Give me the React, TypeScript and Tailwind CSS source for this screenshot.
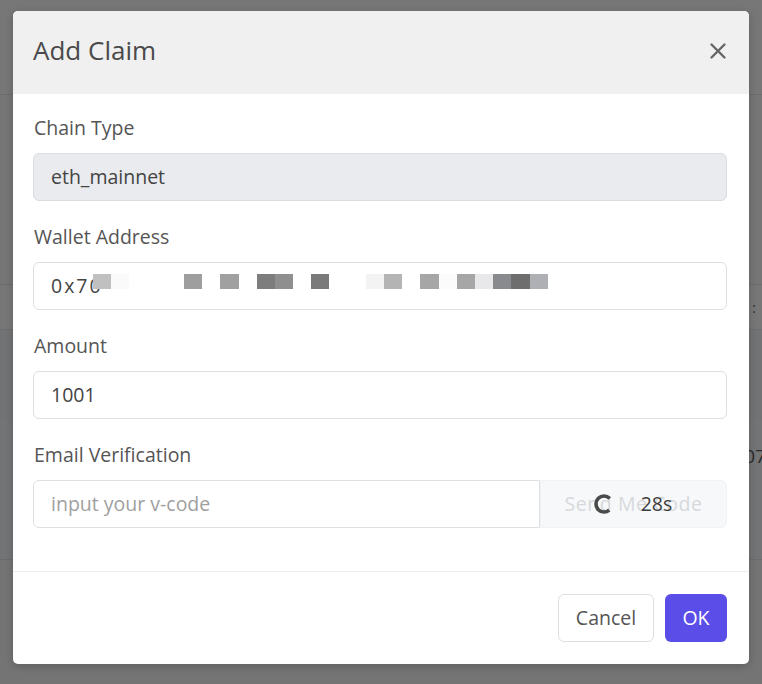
import React from "react";

const mosaic = [
  "#c0c0c0", "#fafafa", "#ffffff", "#ffffff", "#ffffff", "#9e9e9e", "#ffffff",
  "#a0a0a0", "#ffffff", "#7d7d7d", "#8f8f8f", "#ffffff", "#7a7a7a", "#ffffff",
  "#ffffff", "#f3f3f3", "#b4b4b4", "#ffffff", "#a6a6a6", "#fbfbfb", "#a6a6a6",
  "#e8e8ea", "#888a8e", "#6e6e6e", "#aeb0b4",
];

const Label = ({ children }: { children: React.ReactNode }) => (
  <div className="mb-[12px] text-[19.5px] leading-[26px] text-[#555]">{children}</div>
);

const App = () => {
  return (
    <div
      className="relative h-[684px] w-[762px] overflow-hidden bg-[#767676]"
      style={{ fontFamily: "'Open Sans', Lato, sans-serif" }}
    >
      {/* page behind the overlay */}
      <div className="flex flex-col">
        <div className="h-[95px] border-b border-[#6c6c6c] bg-[#777]" />
        <div className="h-[190px] border-b border-[#6c6c6c] bg-[#767676]" />
        <div className="flex h-[45px] justify-end border-b border-[#6c6c6c] bg-[#777] pr-[6px] pt-[12px] text-[14px] text-[#333]">:</div>
        <div className="h-[90px] bg-[#717375]" />
        <div className="flex h-[140px] justify-end border-b border-[#6c6c6c] bg-[#737476] pt-[22px] text-[19px] text-[#2a2a2a]">
          <span className="-mr-[4px]">07</span>
        </div>
        <div className="h-[124px] bg-[#747474]" />
      </div>

      <div className="absolute left-[13px] top-[11px] w-[736px] overflow-hidden rounded-[5px] bg-white shadow-[0_2px_8px_rgba(0,0,0,0.2)]">
        <div className="flex h-[83px] items-center justify-between bg-[#f0f0f0] pl-[20px] pr-[22px]">
          <h2 className="pb-[4px] text-[26px] text-[#4a4a4a]">Add Claim</h2>
          <svg width="18" height="18" viewBox="0 0 18 18" className="mb-[4px]">
            <path d="M2.5 2.5 L15.5 15.5 M15.5 2.5 L2.5 15.5" stroke="#666" strokeWidth="2.4" strokeLinecap="round" />
          </svg>
        </div>

        <div className="flex flex-col gap-[23px] pb-[43px] pl-[20px] pr-[22px] pt-[21px]">
          <div>
            <Label>
              <span className="pl-[1px]">Chain Type</span>
            </Label>
            <div className="flex h-[48px] items-center rounded-[6px] border border-[#d9dce0] bg-[#e9ebee] px-[17px] text-[19.5px] text-[#444]">
              eth_mainnet
            </div>
          </div>

          <div>
            <Label>
              <span className="pl-[1px]">Wallet Address</span>
            </Label>
            <div className="relative flex h-[48px] items-center rounded-[6px] border border-[#dcdfe3] bg-white px-[17px] text-[19.5px] text-[#444]">
              <span className="tracking-[2px]">0x70</span>
              <div className="absolute left-[59px] top-[11px] flex">
                {mosaic.map((c, i) => (
                  <div key={i} className="h-[15px] w-[18.2px]" style={{ background: c }} />
                ))}
              </div>
            </div>
          </div>

          <div>
            <Label>
              <span className="pl-[1px]">Amount</span>
            </Label>
            <div className="flex h-[48px] items-center rounded-[6px] border border-[#dcdfe3] bg-white px-[17px] text-[19.5px] text-[#444]">
              1001
            </div>
          </div>

          <div>
            <Label>
              <span className="pl-[1px]">Email Verification</span>
            </Label>
            <div className="flex h-[48px]">
              <div className="flex flex-1 items-center rounded-l-[6px] border border-[#dcdfe3] bg-white px-[17px] text-[19.5px] text-[#a0a0a0]">
                input your v-code
              </div>
              <div className="relative flex w-[187px] items-center justify-center rounded-r-[6px] border border-[#f1f2f4] bg-[#f7f8f9] text-[19.5px] tracking-[0.6px] text-[#d6d8dc]">
                Send Me Code
                <div className="absolute inset-0 flex items-center justify-center gap-[27px] pr-[1px] tracking-normal">
                  <svg width="20" height="22" viewBox="0 0 20 22">
                    <circle
                      cx="10"
                      cy="11"
                      r="8"
                      fill="none"
                      stroke="#4a4a4a"
                      strokeWidth="3.6"
                      strokeDasharray="37 13.3"
                      strokeDashoffset="-6.8"
                    />
                  </svg>
                  <span className="text-[19.5px] text-[#3c3c3c]">28s</span>
                </div>
              </div>
            </div>
          </div>
        </div>

        <div className="flex h-[93px] items-center justify-end gap-[11px] border-t border-[#eeeeee] pr-[22px]">
          <button className="h-[48px] w-[96px] rounded-[6px] border border-[#dcdfe3] bg-white text-[19.5px] text-[#555]">
            Cancel
          </button>
          <button className="h-[48px] w-[62px] rounded-[6px] bg-[#5b4de8] text-[19.5px] text-white">
            OK
          </button>
        </div>
      </div>
    </div>
  );
};

export default App;
